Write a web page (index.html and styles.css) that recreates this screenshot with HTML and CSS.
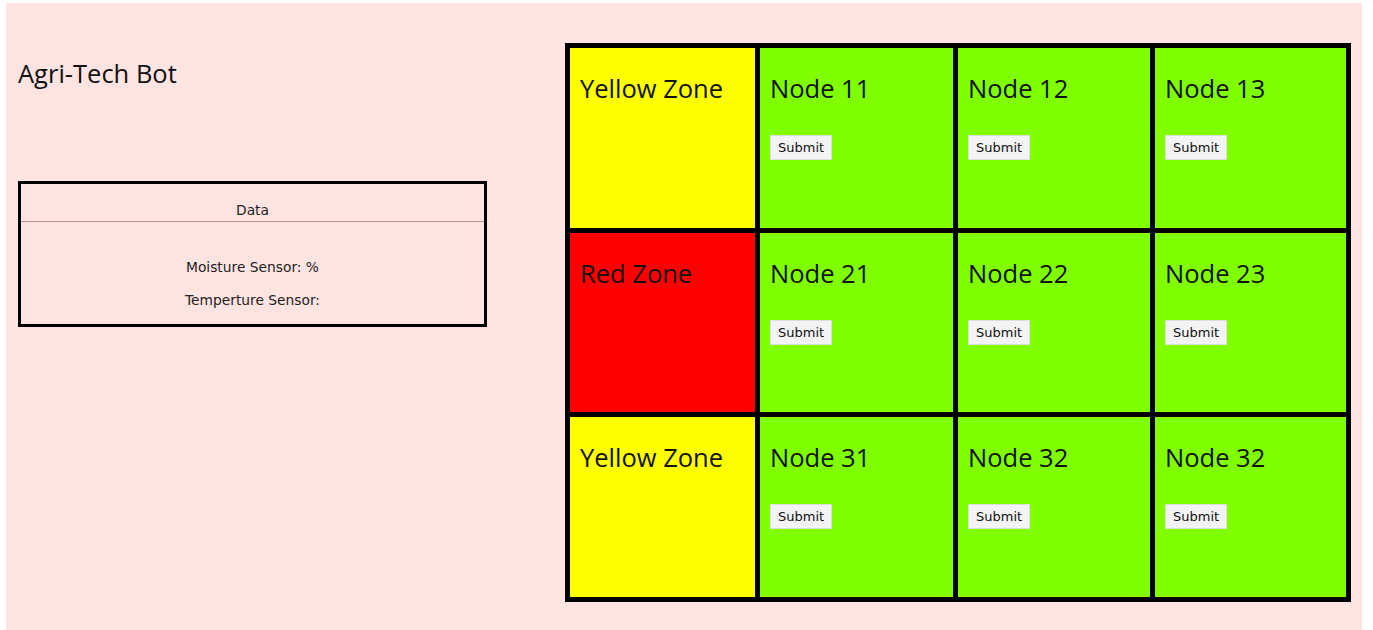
FILE: index.html
```html
<!DOCTYPE html>
<html lang="en">

<head>
  <meta charset="UTF-8">
  <meta name="viewport" content="width=device-width, initial-scale=1.0">
  <title>Agri-Tech Bot</title>
  <link rel="stylesheet" href="styles.css">
</head>

<body>
  <div class="page">
    <div class="side">
      <h1 class="title">Agri-Tech Bot</h1>
      <div class="data-box">
        <div class="data-head">Data</div>
        <p class="reading">Moisture Sensor: <span id="moisture"></span>%</p>
        <p class="reading">Temperture Sensor: <span id="temp"></span></p>
      </div>
    </div>

    <div class="field">
      <div class="cell yellow"><span class="label">Yellow Zone</span></div>
      <div class="cell green"><span class="label">Node 11</span><button>Submit</button></div>
      <div class="cell green"><span class="label">Node 12</span><button>Submit</button></div>
      <div class="cell green"><span class="label">Node 13</span><button>Submit</button></div>

      <div class="cell red"><span class="label">Red Zone</span></div>
      <div class="cell green"><span class="label">Node 21</span><button>Submit</button></div>
      <div class="cell green"><span class="label">Node 22</span><button>Submit</button></div>
      <div class="cell green"><span class="label">Node 23</span><button>Submit</button></div>

      <div class="cell yellow"><span class="label">Yellow Zone</span></div>
      <div class="cell green"><span class="label">Node 31</span><button>Submit</button></div>
      <div class="cell green"><span class="label">Node 32</span><button>Submit</button></div>
      <div class="cell green"><span class="label">Node 32</span><button>Submit</button></div>
    </div>
  </div>
</body>

</html>
```

FILE: styles.css
```css
html,
body {
  height: 100%;
}

body {
  margin: 0;
  background-color: #fff;
  font-family: 'Open Sans', 'Noto Sans', sans-serif;
}

.page {
  display: flex;
  margin: 3px 11px 0 6px;
  min-height: calc(100% - 3px);
  background-color: #ffe4e1;
  padding: 40px 0 0 12px;
  box-sizing: border-box;
}

.side {
  width: 469px;
  margin-right: 78px;
}

.title {
  margin: 13px 0 0;
  font-size: 25.5px;
  font-weight: normal;
  line-height: 34px;
  color: #111;
}

.data-box {
  margin-top: 91px;
  border: 3px solid #000;
  height: 140px;
  font-family: 'DejaVu Sans', Verdana, sans-serif;
  font-size: 13.8px;
  text-align: center;
  color: #222;
}

.data-head {
  padding: 18px 0 3px;
  border-bottom: 1px solid #a99;
}

.reading {
  margin: 0;
  line-height: 18px;
}

.data-head + .reading {
  margin-top: 36px;
}

.reading + .reading {
  margin-top: 15px;
}

.field {
  display: grid;
  grid-template-columns: 185px 193px 192px 191px;
  grid-template-rows: 180px 179px 180px;
  gap: 5px;
  padding: 5px;
  background-color: #000;
  align-self: flex-start;
}

.cell {
  padding: 24px 10px 0;
  display: flex;
  flex-direction: column;
  align-items: flex-start;
}

.yellow {
  background-color: #ffff00;
}

.red {
  background-color: #ff0000;
}

.green {
  background-color: #7fff00;
}

.label {
  font-size: 25.5px;
  line-height: 32px;
  color: #111;
}

button {
  margin-top: 31px;
  padding: 4px 7px;
  font-family: 'DejaVu Sans', Verdana, sans-serif;
  font-size: 13px;
  background-color: #f4f4f4;
  color: #111;
  border: 1px solid #ddd;
  border-radius: 0;
}
```
